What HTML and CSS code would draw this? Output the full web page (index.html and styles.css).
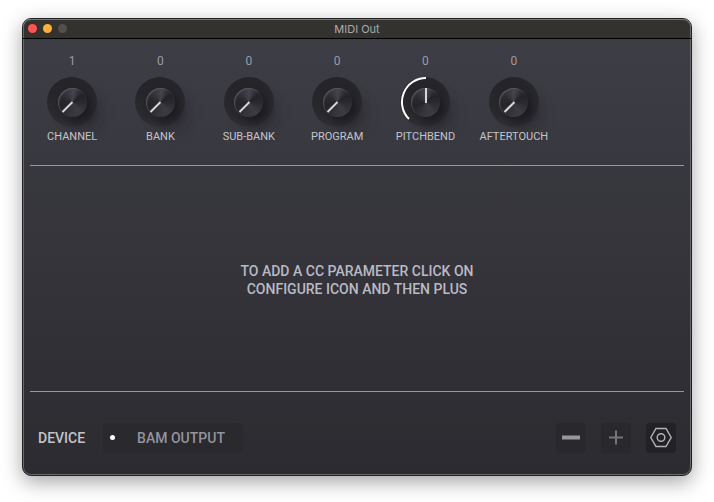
FILE: index.html
```html
<!DOCTYPE html>
<html lang="en">
<head>
<meta charset="utf-8">
<title>MIDI Out</title>
<link rel="stylesheet" href="styles.css">
</head>
<body>
<main class="window">
  <header class="titlebar">
    <div class="lights">
      <button class="light close" aria-label="Close"></button>
      <button class="light minimize" aria-label="Minimize"></button>
      <button class="light zoom" aria-label="Zoom" disabled></button>
    </div>
    <h1 class="title">MIDI Out</h1>
  </header>

  <section class="knobs">
    <div class="knob">
      <output class="value" for="channel">1</output>
      <div class="dial">
        <div class="cap"></div>
        <svg class="marks" viewBox="0 0 50 50" aria-hidden="true"><path class="needle" d="M25.500 25 15.500 35"/></svg>
        <input class="range" id="channel" type="range" min="1" max="16" value="1">
      </div>
      <label class="name" for="channel">CHANNEL</label>
    </div>
    <div class="knob">
      <output class="value" for="bank">0</output>
      <div class="dial">
        <div class="cap"></div>
        <svg class="marks" viewBox="0 0 50 50" aria-hidden="true"><path class="needle" d="M25.500 25 15.500 35"/></svg>
        <input class="range" id="bank" type="range" min="0" max="127" value="0">
      </div>
      <label class="name" for="bank">BANK</label>
    </div>
    <div class="knob">
      <output class="value" for="sub-bank">0</output>
      <div class="dial">
        <div class="cap"></div>
        <svg class="marks" viewBox="0 0 50 50" aria-hidden="true"><path class="needle" d="M25.500 25 15.500 35"/></svg>
        <input class="range" id="sub-bank" type="range" min="0" max="127" value="0">
      </div>
      <label class="name" for="sub-bank">SUB-BANK</label>
    </div>
    <div class="knob">
      <output class="value" for="program">0</output>
      <div class="dial">
        <div class="cap"></div>
        <svg class="marks" viewBox="0 0 50 50" aria-hidden="true"><path class="needle" d="M25.500 25 15.500 35"/></svg>
        <input class="range" id="program" type="range" min="0" max="127" value="0">
      </div>
      <label class="name" for="program">PROGRAM</label>
    </div>
    <div class="knob">
      <output class="value" for="pitchbend">0</output>
      <div class="dial">
        <div class="cap"></div>
        <svg class="marks" viewBox="0 0 50 50" aria-hidden="true"><path class="arc" d="M9 42A24 24 0 0 1 26 1"/><path class="needle" d="M26 26V11"/></svg>
        <input class="range" id="pitchbend" type="range" min="-64" max="64" value="0">
      </div>
      <label class="name" for="pitchbend">PITCHBEND</label>
    </div>
    <div class="knob">
      <output class="value" for="aftertouch">0</output>
      <div class="dial">
        <div class="cap"></div>
        <svg class="marks" viewBox="0 0 50 50" aria-hidden="true"><path class="needle" d="M25.500 25 15.500 35"/></svg>
        <input class="range" id="aftertouch" type="range" min="0" max="127" value="0">
      </div>
      <label class="name" for="aftertouch">AFTERTOUCH</label>
    </div>
  </section>

  <section class="parameters">
    <p class="hint">TO ADD A CC PARAMETER CLICK ON<br>CONFIGURE ICON AND THEN PLUS</p>
  </section>

  <footer class="footer">
    <label class="device-label" for="device">DEVICE</label>
    <div class="device">
      <span class="dot"></span>
      <select class="device-select" id="device"><option>BAM OUTPUT</option></select>
    </div>
    <div class="actions">
      <button class="action" aria-label="Remove parameter"><svg class="icon" viewBox="0 0 30 30"><path class="minus" d="M6 14.500H24"/></svg></button>
      <button class="action" aria-label="Add parameter"><svg class="icon" viewBox="0 0 30 30"><path class="plus" d="M8 14.500H22M15 7.500V21.500"/></svg></button>
      <button class="action configure" aria-label="Configure"><svg class="icon" viewBox="0 0 30 30"><path class="hex" d="M4.800 14.500 10 5.500H20L25.200 14.500 20 23.500H10Z"/><circle class="hex" cx="15" cy="14.500" r="3.800"/></svg></button>
    </div>
  </footer>
</main>
</body>
</html>
```
FILE: styles.css
```css
* {
  box-sizing: border-box;
}

body {
  display: flex;
  min-height: 100vh;
  margin: 0;
  padding: 18px 22px 26px;
  background: #fff;
  font-family: Roboto, "Liberation Sans", sans-serif;
  color: #c4c4cc;
}

button,
select {
  margin: 0;
  padding: 0;
  border: 0;
  font: inherit;
  color: inherit;
  appearance: none;
}

.window {
  display: flex;
  flex: 1;
  flex-direction: column;
  border: 1px solid #202122;
  border-radius: 9px;
  background: linear-gradient(#3e3e46, #2c2b30);
  box-shadow: inset 0 0 0 1px #68696b, 0 6px 20px rgba(0, 0, 0, 0.36);
}

.titlebar {
  display: grid;
  grid-template-columns: 1fr auto 1fr;
  align-items: center;
  height: 20px;
  padding: 0 5px;
  border-bottom: 1px solid #000;
  border-radius: 8px 8px 0 0;
  background: #33322f;
  box-shadow: inset 0 1px #77787a, inset 1px 0 #68696b, inset -1px 0 #68696b;
}

.lights {
  display: flex;
  gap: 6px;
}

.light {
  width: 9px;
  height: 9px;
  border-radius: 50%;
}

.close {
  background: #ff5552;
}

.minimize {
  background: #ffb13a;
}

.zoom {
  background: #51504d;
}

.title {
  margin: 0;
  font: 400 11px/18px Inter, sans-serif;
  color: #acaba8;
}

.knobs {
  display: grid;
  grid-template-columns: repeat(6, 1fr);
  width: 80%;
  max-width: 530px;
  height: 126px;
  margin: 0 5px;
  padding-top: 14px;
}

.knob {
  display: flex;
  flex-direction: column;
  align-items: center;
}

.value {
  height: 16px;
  font-size: 12px;
  line-height: 17px;
  color: #9b9ba6;
}

.dial {
  display: grid;
  place-items: center;
  width: 50px;
  height: 50px;
  margin: 8px 0 1px;
  border-radius: 50%;
  background: linear-gradient(155deg, #242429 15%, #29292e 50%, #37373e 95%);
}

.dial > * {
  grid-area: 1 / 1;
}

.cap {
  width: 29px;
  height: 29px;
  border-radius: 50%;
  background: conic-gradient(from 5deg, #44444c, #232328 45deg, #28282d 80deg, #3b3b41 140deg, #34343a 190deg, #242429 245deg, #29292e 290deg, #44444c);
  box-shadow: inset 1px 1px 1px #55555b, 6px 6px 12px rgba(20, 20, 24, 0.75), 12px 12px 18px rgba(20, 20, 24, 0.2);
}

.marks {
  width: 50px;
  height: 50px;
}

.needle,
.arc {
  fill: none;
  stroke: #d7d7d7;
  stroke-width: 2;
}

.arc {
  stroke: #fff;
}

.range {
  width: 50px;
  height: 50px;
  margin: 0;
  opacity: 0;
}

.name {
  font-size: 11px;
  line-height: 18px;
}

.parameters {
  display: grid;
  flex: 1;
  place-items: center;
  margin: 0 7px;
  padding-top: 2px;
  border: solid #97979c;
  border-width: 1px 0;
}

.hint {
  margin: 0;
  font-size: 14px;
  font-weight: 500;
  line-height: 18px;
  text-align: center;
  color: #babac4;
}

.footer {
  display: flex;
  align-items: center;
  height: 83px;
  padding: 8px 15px 0;
}

.device-label {
  font-size: 14px;
  font-weight: 500;
}

.device {
  display: flex;
  align-items: center;
  width: 140px;
  height: 30px;
  margin-left: 18px;
  border-radius: 4px;
  background: #2a292e;
}

.dot {
  width: 5px;
  height: 5px;
  margin: 0 22px 0 7px;
  border-radius: 50%;
  background: #fff;
}

.device-select {
  flex: 1;
  height: 30px;
  background: transparent;
  font-size: 14px;
  font-weight: 500;
  color: #94949d;
}

.actions {
  display: flex;
  gap: 15px;
  margin-left: auto;
}

.action {
  width: 30px;
  height: 30px;
  border-radius: 4px;
  background: #29282d;
}

.configure {
  background: #222126;
}

.icon {
  display: block;
  fill: none;
}

.minus {
  stroke: #98989a;
  stroke-width: 4;
}

.plus {
  stroke: #77777a;
  stroke-width: 2;
}

.hex {
  stroke: #b4b4b6;
  stroke-width: 1.4;
}
```
